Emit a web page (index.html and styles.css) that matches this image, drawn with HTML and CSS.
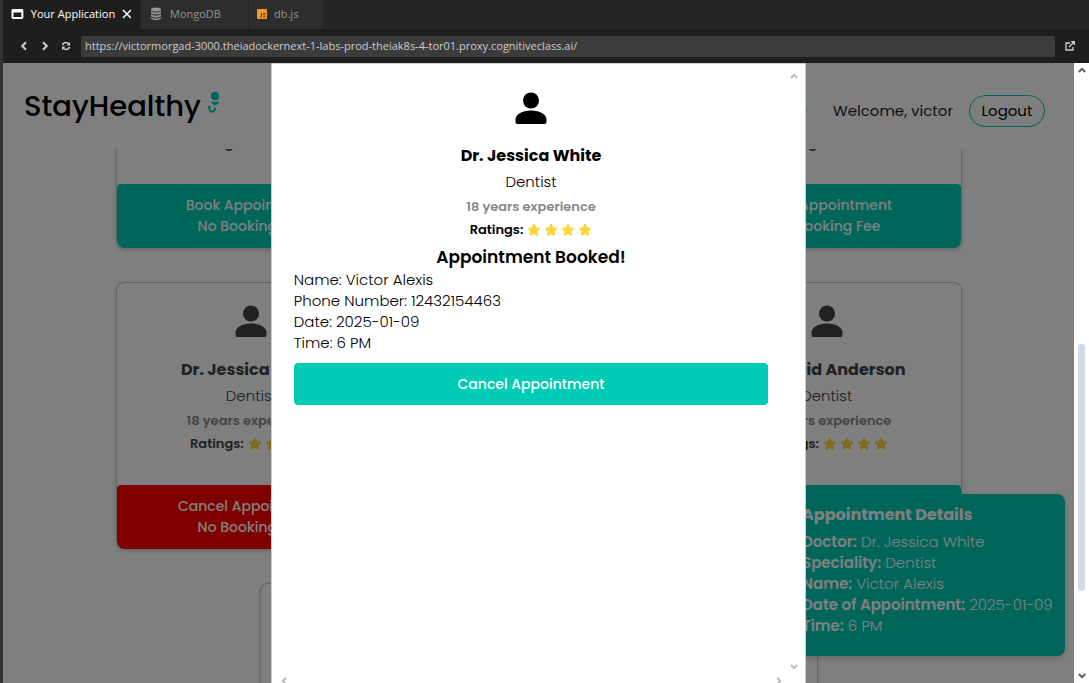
FILE: index.html
```html
<!DOCTYPE html>
<html lang="en">
<head>
<meta charset="utf-8">
<meta name="viewport" content="width=device-width, initial-scale=1">
<title>StayHealthy</title>
<link rel="stylesheet" href="styles.css">
</head>
<body>
<svg class="symbols" aria-hidden="true">
  <symbol id="person" viewBox="0 0 32 32"><circle cx="16" cy="8.500" r="8"/><path d="M.5 27.500C.5 22.500 7 18.500 16 18.500S31.500 22.500 31.500 27.500V30Q31.500 32 29.500 32H2.500Q.5 32 .5 30Z"/></symbol>
  <symbol id="star" viewBox="0 0 14 14"><path d="M7 1.500 8.600 5 12.300 5.500 9.600 8.100 10.300 11.900 7 10.100 3.700 11.900 4.400 8.100 1.700 5.500 5.400 5Z" stroke-width="1.700" stroke-linejoin="round"/></symbol>
  <symbol id="chevron" viewBox="0 0 8 6"><path d="M.8 5 4 1.800 7.200 5" fill="none" stroke="currentColor" stroke-width="2"/></symbol>
</svg>
<header class="browser">
  <nav class="tabs" aria-label="Editor tabs">
    <button class="tab tab-active"><svg width="13" height="12" viewBox="0 0 13 12"><path fill-rule="evenodd" fill="#fff" d="M2 1H11Q12.500 1 12.500 2.500V9.500Q12.500 11 11 11H2Q.5 11 .5 9.500V2.500Q.5 1 2 1ZM2.500 4.500V9H10.500V4.500Z"/></svg>Your Application<svg class="close" width="10" height="10" viewBox="0 0 10 10"><path d="M1 1 9 9M9 1 1 9" stroke="#fff" stroke-width="1.500"/></svg></button>
    <button class="tab tab-mongo"><svg width="12" height="14" viewBox="0 0 12 14" fill="#959595"><ellipse cx="6" cy="2.500" rx="5" ry="2"/><path d="M1 4Q6 7 11 4V6.200Q6 9 1 6.200ZM1 7.300Q6 10 11 7.300V9.200Q6 12 1 9.200ZM1 10.300Q6 13 11 10.300V11.500Q6 15 1 11.500Z"/></svg>MongoDB</button>
    <button class="tab tab-file"><svg width="10" height="10" viewBox="0 0 10 10"><rect width="10" height="10" rx="1" fill="#f0982d"/><path d="M4.500 4V7.500Q4.500 8.500 3 8.200M8.500 4.500Q6.200 4 6.300 5.300 6.500 6 7.500 6.200 8.500 6.700 8.200 7.700 7.500 8.700 6 8" fill="none" stroke="#5c3a18"/></svg>db.js</button>
  </nav>
  <form class="address">
    <button type="button" class="tool" aria-label="Back"><svg width="8" height="10" viewBox="0 0 8 10"><path d="M6 1.200 2.200 5 6 8.800" fill="none" stroke="currentColor" stroke-width="2"/></svg></button>
    <button type="button" class="tool" aria-label="Forward"><svg width="8" height="10" viewBox="0 0 8 10"><path d="M2 1.200 5.800 5 2 8.800" fill="none" stroke="currentColor" stroke-width="2"/></svg></button>
    <button type="button" class="tool" aria-label="Reload"><svg width="10" height="10" viewBox="0 0 10 10"><path d="M1.500 4Q2.500 1.500 5 1.500 6.500 1.500 8 3M8.500 6Q7.500 8.500 5 8.500 3.500 8.500 2 7" fill="none" stroke="currentColor" stroke-width="1.500"/><path d="M9 1V4.500H5.500ZM1 9V5.500H4.500Z" fill="currentColor"/></svg></button>
    <input class="url" type="text" aria-label="Address" value="https://victormorgad-3000.theiadockernext-1-labs-prod-theiak8s-4-tor01.proxy.cognitiveclass.ai/">
    <button type="button" class="tool tool-open" aria-label="Open in new window"><svg width="10" height="10" viewBox="0 0 10 10"><path d="M5 2H1V9H8V6M4 6 8.500 1.500" fill="none" stroke="#c8ccd8" stroke-width="1.300"/><path d="M5.500 0H10V4.500Z" fill="#c8ccd8"/></svg></button>
  </form>
</header>
<div class="viewport">
  <div class="page">
    <nav class="navbar">
      <a class="logo" href="#">StayHealthy<svg width="14" height="24" viewBox="0 0 14 24"><circle cx="8" cy="5" r="4.200" fill="#00ccb5"/><path d="M4 10.300Q8 11.500 12 10.300 11.500 14 8 14 4.500 14 4 10.300Z" fill="#00ccb5"/><path d="M1 16H3.500M2.500 16.500Q2.500 20.800 5 20.800 8 20.800 8 16.500" fill="none" stroke="#00ccb5" stroke-width="2"/></svg></a>
      <div class="nav-links"><a class="nav-link" href="#">Appointments</a><span class="welcome">Welcome, victor</span><button class="logout">Logout</button></div>
    </nav>
    <main class="doctors">
      <div class="row row-first">
        <article class="card"><p class="rating">Ratings: <span class="stars"><svg></svg><svg></svg><svg></svg><svg></svg></span></p><button class="book">Book Appointment<br>No Booking Fee</button></article>
        <article class="card"><p class="rating">Ratings: <span class="stars"><svg></svg><svg></svg><svg></svg></span></p><button class="book">Book Appointment<br>No Booking Fee</button></article>
      </div>
      <div class="row">
        <article class="card">
          <svg class="avatar"><use href="#person"/></svg><h3 class="name">Dr. Jessica White</h3><p class="speciality">Dentist</p><p class="experience">18 years experience</p>
          <p class="rating">Ratings: <span class="stars"><svg><use href="#star"/></svg><svg><use href="#star"/></svg><svg><use href="#star"/></svg><svg><use href="#star"/></svg></span></p>
          <button class="book book-cancel">Cancel Appointment<br>No Booking Fee</button>
        </article>
        <article class="card">
          <svg class="avatar"><use href="#person"/></svg><h3 class="name">Dr. David Anderson</h3><p class="speciality">Dentist</p><p class="experience">18 years experience</p>
          <p class="rating">Ratings: <span class="stars"><svg><use href="#star"/></svg><svg><use href="#star"/></svg><svg><use href="#star"/></svg><svg><use href="#star"/></svg></span></p>
          <button class="book" aria-label="Book Appointment"></button>
        </article>
      </div>
      <div class="row row-pair"><article class="card"></article><article class="card"></article></div>
    </main>
    <aside class="details">
      <h3 class="details-title">Appointment Details</h3>
      <p><strong>Doctor:</strong> Dr. Jessica White</p>
      <p><strong>Speciality:</strong> Dentist</p>
      <p><strong>Name:</strong> Victor Alexis</p>
      <p><strong>Date of Appointment:</strong> 2025-01-09</p>
      <p><strong>Time:</strong> 6 PM</p>
    </aside>
    <div class="overlay">
      <section class="modal" role="dialog" aria-label="Appointment booked">
        <div class="modal-main">
          <div class="modal-body">
            <svg class="avatar"><use href="#person"/></svg><h3 class="name">Dr. Jessica White</h3><p class="speciality">Dentist</p><p class="experience">18 years experience</p>
            <p class="rating">Ratings: <span class="stars"><svg><use href="#star"/></svg><svg><use href="#star"/></svg><svg><use href="#star"/></svg><svg><use href="#star"/></svg></span></p>
            <h3 class="booked">Appointment Booked!</h3>
            <div class="summary"><p>Name: Victor Alexis</p><p>Phone Number: 12432154463</p><p>Date: 2025-01-09</p><p>Time: 6 PM</p></div>
            <button class="cancel">Cancel Appointment</button>
          </div>
          <div class="modal-scroll"><svg class="arrow"><use href="#chevron"/></svg><svg class="arrow arrow-down"><use href="#chevron"/></svg></div>
        </div>
        <div class="modal-hscroll"><svg class="arrow arrow-left"><use href="#chevron"/></svg><svg class="arrow arrow-right"><use href="#chevron"/></svg></div>
      </section>
    </div>
  </div>
  <div class="scrollbar"><svg class="arrow"><use href="#chevron"/></svg><div class="track"><div class="thumb"></div></div><svg class="arrow arrow-down"><use href="#chevron"/></svg></div>
</div>
</body>
</html>
```
FILE: styles.css
```css
* { box-sizing: border-box; }
body { margin: 0; height: 100vh; display: flex; flex-direction: column; overflow: hidden; border-left: 3px solid #333; font-family: Poppins, Inter, sans-serif; font-size: 15px; font-weight: 300; line-height: 21px; color: #000; }
h3, p { margin: 0; }
button { font: inherit; border: 0; padding: 0; }
a { color: inherit; text-decoration: none; }
.symbols { position: absolute; width: 0; height: 0; }

.browser { flex: none; background: #1e1e1e; font-family: "Segoe UI", "Open Sans", sans-serif; font-size: 11px; font-weight: 400; }
.tabs { display: flex; height: 29px; background: #252526; }
.tab { display: flex; align-items: center; gap: 7px; padding: 0 8px 2px; background: #2d2d2d; color: #969696; border-right: 1px solid #252526; white-space: nowrap; }
.tab-active { background: #1e1e1e; color: #fff; width: 138px; }
.close { margin-left: auto; }
.tab-mongo { width: 108px; padding-left: 9px; gap: 8px; }
.tab-file { width: 75px; }
.address { display: flex; align-items: center; height: 34px; padding-left: 10px; }
.tool { width: 21px; height: 21px; display: grid; place-items: center; background: none; color: #d0d0d0; }
.tool-open { width: 34px; padding-right: 4px; }
.url { flex: 1; min-width: 0; height: 21px; margin-left: 5px; padding: 0 4px 2px; border: 0; border-radius: 2px; background: #3c3c3c; color: #ccc; font: inherit; }

.viewport { flex: 1; min-height: 0; display: flex; }
.page { flex: 1; min-width: 0; position: relative; display: flex; flex-direction: column; overflow: hidden; background: #fff; }
.navbar { flex: none; height: 86px; padding: 0 29px 0 21px; display: flex; justify-content: space-between; align-items: center; }
.logo { display: flex; align-items: center; gap: 6px; font-size: 29px; font-weight: 500; line-height: 40px; }
.logo svg { margin-bottom: 6px; }
.nav-links { display: flex; align-items: center; gap: 16px; padding-top: 9px; font-weight: 400; }
.nav-link { margin-right: 10px; padding-bottom: 6px; color: #0a3a9c; }
.welcome { color: #1a1c30; }
.logout { width: 76px; height: 32px; border: 1px solid #00ccb5; border-radius: 16px; background: none; color: #000; }

.doctors { flex: 1; min-height: 0; overflow: hidden; display: flex; flex-direction: column; align-items: center; gap: 34px; padding-left: 1px; }
.row { flex: none; width: 79%; display: flex; justify-content: space-between; }
.row-first { height: 99px; align-items: flex-end; }
.row-pair { width: 558px; }
.card { width: 270px; height: 267px; flex: none; display: flex; flex-direction: column; align-items: center; border: 1px solid #c8c8c8; border-bottom: 0; border-radius: 8px; color: #404246; box-shadow: 0 2px 4px #0003; overflow: hidden; padding-top: 22px; }
.row-first .card { padding-top: 149px; }
.avatar { width: 32px; height: 32px; margin-bottom: 21px; fill: currentColor; flex: none; }
.name { font-size: 16px; line-height: 24px; font-weight: 700; }
.speciality { margin: 3px 0 4px; }
.experience { font-size: 13px; font-weight: 600; color: #888; }
.rating { display: flex; align-items: center; gap: 4px; margin-top: 2px; font-size: 13px; font-weight: 600; }
.stars { display: flex; gap: 3px; }
.stars svg { width: 14px; height: 14px; fill: #ffd43b; stroke: #ffd43b; }
.book { width: 100%; height: 64px; flex: none; margin-top: auto; border-radius: 4px; background: #00ccb5; color: #fff; font-size: 14px; font-weight: 500; }
.book-cancel { background: #f00; }

.details { position: absolute; right: 9px; bottom: 27px; width: 280px; height: 162px; padding: 9px 17px; border-radius: 8px; background: #00ccb5; color: #fff; box-shadow: 0 2px 6px #0003; white-space: nowrap; }
.details strong { font-weight: 600; }
.details-title { font-size: 16px; line-height: 24px; margin-bottom: 4px; }
.overlay { position: absolute; inset: 0; display: flex; justify-content: center; background: #00000080; }
.modal { width: 50%; display: flex; flex-direction: column; background: #fff; border: 1px solid #ccc; border-bottom: 0; }
.modal-main { flex: 1; display: flex; }
.modal-body { flex: 1; display: flex; flex-direction: column; align-items: center; padding: 28px 14px 0 22px; }
.modal-body .avatar { margin-bottom: 20px; }
.booked { font-size: 17px; line-height: 24px; margin-top: 5px; font-weight: 600; }
.summary { width: 100%; }
.cancel { width: 100%; height: 42px; margin-top: 10px; border-radius: 4px; background: #00ccb5; color: #fff; font-size: 14px; font-weight: 500; }
.modal-scroll { width: 23px; display: flex; flex-direction: column; justify-content: space-between; align-items: center; padding: 9px 0 8px; }
.modal-hscroll { height: 5px; display: flex; justify-content: space-between; padding: 0 22px 0 8px; }
.arrow { width: 8px; height: 6px; color: #bbb; flex: none; }
.arrow-down { transform: rotate(180deg); }
.arrow-left { transform: rotate(-90deg); }
.arrow-right { transform: rotate(90deg); }
.scrollbar { width: 15px; flex: none; display: flex; flex-direction: column; align-items: center; padding: 4px 0; background: #fff; }
.scrollbar .arrow { color: #606060; }
.track { flex: 1; width: 7px; padding-top: 271px; }
.thumb { height: 247px; border-radius: 3px; background: #d1dbe5; }
```
